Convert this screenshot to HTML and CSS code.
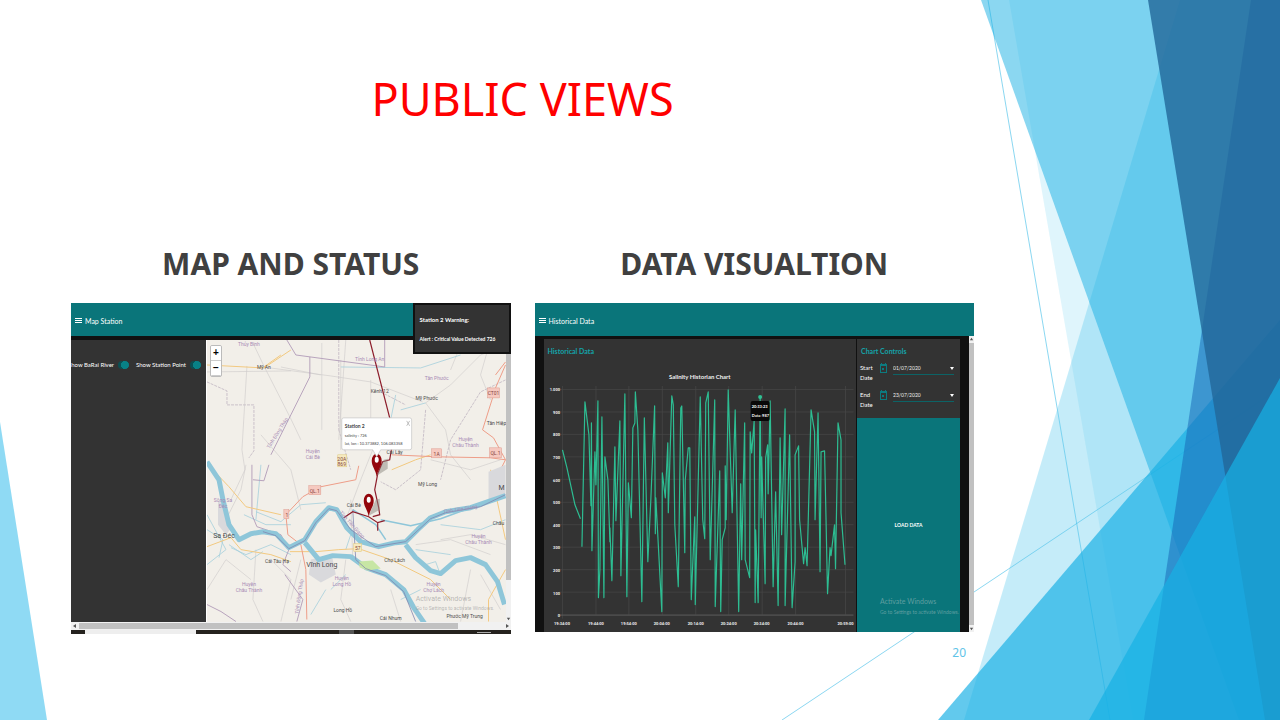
FILE: index.html
```html
<!DOCTYPE html>
<html lang="en">
<head>
<meta charset="utf-8">
<title>Public Views</title>
<link rel="stylesheet" href="styles.css">
</head>
<body>
<main class="slide">
  <svg class="facets" viewBox="0 0 1280 720" preserveAspectRatio="none" aria-hidden="true">
    <path class="facet-line" d="M988 0L1110 720M782 720L1280 388"/>
    <path fill="#5fcbef" fill-opacity=".7" d="M0 422L47 720H0z"/>
    <path fill="#5fcbef" fill-opacity=".36" d="M1180 0H1280V720H964z"/>
    <path fill="#5fcbef" fill-opacity=".2" d="M1009 0H1280V720H1133z"/>
    <path fill="#17b0e4" fill-opacity=".68" d="M1280 320V720H938z"/>
    <path fill="#17b0e4" fill-opacity=".5" d="M981 0H1280V720H1239z"/>
    <path fill="#1662b3" fill-opacity=".5" d="M1251 0H1280V720H1144z"/>
    <path fill="#226698" fill-opacity=".8" d="M1148 0H1280V720H1265z"/>
    <path fill="#17b0e4" fill-opacity=".7" d="M1280 378V720H1089z"/>
  </svg>

  <div class="content">
    <h1 class="title">PUBLIC VIEWS</h1>
    <div class="columns">
      <section class="column">
        <h2 class="heading">MAP AND STATUS</h2>
        <div class="screen">
          <header class="bar"><svg class="burger" viewBox="0 0 7 7"><path d="M0 1.500H7M0 3.500H7M0 5.500H7"/></svg>Map Station</header>
          <aside class="toast"><strong>Station 2 Warning:</strong><b>Alert : Critical Value Detected 726</b></aside>
          <div class="map-body">
            <div class="toggles">
              <label class="toggle toggle-first">Show BaRai River<input type="checkbox" checked></label>
              <label class="toggle">Show Station Point<input type="checkbox" checked></label>
            </div>
            <div class="map">
              <svg class="map-art" viewBox="206 340 299 282">
                <g class="border">
                  <path d="M206 382L226 391V405H253V451L248 458"/>
                  <path d="M338 340V430M338 430L350 470M380 392L405 405M425 410L420 470L395 490L380 482M505 380L480 392L450 440L440 480"/>
                </g>
                <g class="minor">
                  <path d="M252 343L263 366L290 419L300 440M246 366L241 450L244 470L230 500M206 372L290 371M262 367L330 376L370 382L422 402M321 343V430M340 360V450M370 380V430M425 403L450 385L480 355L505 345M280 367L320 375M425 403L445 430L450 455L470 480M345 340L338 440M460 345L450 370M260 435L290 470L300 510M245 465L240 490L225 520M206 590L225 560L250 580M300 560L290 600M350 500L352 560M380 430L360 480L345 520M430 460L470 470L500 460M440 540L470 535L505 545M415 545L450 540L490 555M345 560L340 600L350 622M270 560L290 580L280 622M470 570L460 622M480 575L500 610M390 590L400 622M255 550L252 600L262 622M490 340L480 375L490 400"/>
                </g>
                <g class="stream">
                  <path d="M206 515L225 550L206 565M230 548L245 555L270 545L290 555M243 515L265 525L290 525M395 395L390 420M340 367L420 368L460 355M400 410L425 403M255 512L280 522L300 505L325 503M260 465L255 520M350 535L345 550M440 525L480 530L505 520M415 550L450 555M325 590L310 615M345 575L330 590M420 590L400 600M206 530L222 540L218 558M228 545L250 560L262 552M425 565L435 562L439 573"/>
                </g>
                <g class="purple">
                  <path d="M286 340L295 355L384 367V340M309 357V377L290 415L270 455M251 465V515L256 527L280 535L288 550L282 565L290 572M206 605L220 612L235 622M252 480L263 481L268 465M284 575L302 600L296 622"/>
                </g>
                <g class="road">
                  <path d="M206 365L263 368L290 350M207 465L228 487L245 507L280 515M206 547L230 538L240 550L270 555L290 562M263 367L280 355M289 552L315 552L338 550L358 549L390 560L430 580L450 600M391 470L415 460L430 455M490 470L505 540M505 570L488 600V622"/>
                </g>
                <g class="highway">
                  <path d="M285 515L302 497L320 487L355 480L358 466M391 455L436 457L490 458L505 460M285 515L287 535L300 545L305 570L306 620M495 375L505 362M493 395L482 430L493 438L505 460L495 480M505 365L492 395"/>
                </g>
                <path fill="#d9d9dc" d="M217 502L223 500L229 530L225 535L217 525zM310 560L331 555L335 575L320 583L308 575zM488 472L505 465V495L488 500z"/>
                <g class="river">
                  <path d="M206 462L218 480L222 500L228 525L238 540L250 534L262 532L275 534L288 548L304 540L315 522L328 508L336 510L346 528L360 542L378 547L395 543L405 542L417 530L430 518L445 512L470 508L505 496"/>
                  <path d="M304 543L318 560L332 556L350 557L365 568L385 575L403 590L413 608L424 624"/>
                  <path d="M405 545L415 558L430 571L440 574L455 561L470 558L485 565L497 582L504 605"/>
                  <path class="thin" d="M352 510L375 525L385 540M380 520L410 526L440 519L470 508"/>
                </g>
                <path fill="#c7e6a4" d="M358 562L372 561L380 569L367 571L359 568z"/>
                <path class="ferry" d="M262 532L275 536L288 549L304 541L315 523L328 509L336 511L350 530L375 547L405 542L430 519L445 513L480 507L505 495M352 510L355 560L365 569L385 576L403 592L415 622"/>
                <g class="route">
                  <path d="M369 340L389 418L391 448L389 460L382 462L377 474L374 490L378 508L379 515L372 517M343 518L352 512L368 517L377 523L384 521M377 523V531"/>
                </g>
                <g class="shield">
                  <rect x="487" y="388" width="12" height="10"/><rect x="431" y="449" width="10" height="9"/><rect x="489" y="448" width="12" height="10"/><rect x="308" y="486" width="12" height="9"/><rect x="283" y="510" width="5" height="9"/>
                </g>
                <g fill="#f6eac0" stroke="#ddc77b" stroke-width=".5"><rect x="337" y="455" width="9" height="12"/><rect x="353" y="544" width="8" height="8"/></g>
                <g class="shield-text"><text x="493" y="395">CT01</text><text x="436" y="456">1A</text><text x="495" y="455">QL.1</text><text x="314" y="493">QL.1</text><text x="286" y="517">1</text><text x="341" y="461">20A</text><text x="341" y="466">869</text><text x="357" y="550">57</text></g>
                <g class="district">
                  <text x="248" y="346">Thủy Bình</text><text x="369" y="361">Tỉnh Long An</text><text x="436" y="380">Tân Phước</text><text x="465" y="441">Huyện</text><text x="465" y="447">Châu Thành</text><text x="312" y="453">Huyện</text><text x="312" y="459">Cái Bè</text><text x="222" y="502">Sông Sa</text><text x="222" y="508">Đéc</text><text x="248" y="586">Huyện</text><text x="248" y="592">Châu Thành</text><text x="341" y="580">Huyện</text><text x="341" y="586">Long Hồ</text><text x="433" y="586">Huyện</text><text x="433" y="592">Chợ Lách</text><text x="478" y="538">Huyện</text><text x="478" y="544">Châu Thành</text>
                  <text transform="translate(278 434) rotate(-58)">Tỉnh Đồng Tháp</text><text transform="translate(350 526) rotate(48)">Tỉnh Tiền Giang</text><text transform="translate(460 511) rotate(-9)">Tỉnh Tiền Giang</text><text transform="translate(300 597) rotate(-82)">Tỉnh Đồng Tháp</text>
                </g>
                <g class="place">
                  <text x="263" y="369">Mỹ An</text><text x="379" y="393">Kênh 12</text><text x="426" y="400">Mỹ Phước</text><text x="496" y="425">Tân Hiệp</text><text x="394" y="454">Cai Lậy</text><text x="427" y="486">Mỹ Long</text><text x="353" y="507">Cái Bè</text><text x="276" y="563">Cái Tàu Hạ</text><text x="394" y="562">Chợ Lách</text><text x="342" y="612">Long Hồ</text><text x="390" y="620">Cái Nhum</text><text x="464" y="618">Phước Mỹ Trung</text><text x="498" y="525">Châu</text>
                  <g class="city"><text x="223" y="538">Sa Đéc</text><text x="321" y="567">Vĩnh Long</text><text x="501" y="490">M</text></g>
                </g>
                <g class="ghost"><text class="ghost-big" x="415" y="601">Activate Windows</text><text x="415" y="610">Go to Settings to activate Windows.</text></g>
                <path fill="#8b8780" fill-opacity=".5" d="M376 476L383 460L387 459L387 469zM368 516L375 500L379 499L379 510z"/>
                <path class="pin" d="M376 477C375 470 371 467 371 461A5 7 0 0 1 381 461C381 467 377 470 376 477z"/>
                <path class="pin" d="M368 517C367 510 363 507 363 501A5 7 0 0 1 373 501C373 507 369 510 368 517z"/>
                <g fill="#fff"><ellipse cx="376" cy="460" rx="2" ry="3"/><ellipse cx="368" cy="500" rx="2" ry="3"/></g>
                <g class="popup">
                  <path class="bubble" d="M343 418H409Q411 418 411 420V448Q411 450 409 450H380L376 457L372 450H343Q341 450 341 448V420Q341 418 343 418z"/>
                  <text class="popup-name" x="344" y="428">Station 2</text><text x="344" y="437">salinity : 726</text><text x="344" y="445">lat, lon : 10.373882, 106.083358</text>
                  <path d="M406 421L409 426M409 421L406 426" stroke="#999" stroke-width=".6"/>
                </g>
              </svg>
              <div class="zoomer"><button type="button" aria-label="Zoom in">+</button><button type="button" aria-label="Zoom out">−</button></div>
            </div>
            <div class="vscroll"><i class="vthumb vthumb-map"></i><svg viewBox="0 0 6 6"><path d="M1 2H5L3 5z"/></svg></div>
          </div>
          <div class="hscroll"><svg viewBox="0 0 6 6"><path d="M4 1V5L1 3z"/></svg><i class="hthumb"></i><svg class="arrow-right" viewBox="0 0 6 6"><path d="M2 1V5L5 3z"/></svg></div>
          <div class="taskbar"><i class="task-search"></i><i class="task-item"></i><i class="task-clock"></i></div>
        </div>
      </section>

      <section class="column">
        <h2 class="heading">DATA VISUALTION</h2>
        <div class="screen">
          <header class="bar"><svg class="burger" viewBox="0 0 7 7"><path d="M0 1.500H7M0 3.500H7M0 5.500H7"/></svg>Historical Data</header>
          <div class="data-body">
            <div class="cards">
              <div class="chart-card">
                <h3 class="card-title">Historical Data</h3>
                <svg class="chart" viewBox="543 366 313 266">
                  <path class="grid" d="M561.500 386V619M595 386V615M628 386V615M661.500 386V615M695 386V615M728 386V615M761.500 386V615M795 386V615M845 386V615M558 389.500H853M558 412H853M558 434.500H853M558 457H853M558 479.500H853M558 502.500H853M558 525H853M558 547.500H853M558 570H853M558 592.500H853"/>
                  <path class="axis" d="M558 615.500H853"/>
                  <text class="chart-title" x="699" y="379">Salinity Historian Chart</text>
                  <g class="ytick"><text x="559" y="391">1.000</text><text x="559" y="414">900</text><text x="559" y="436">800</text><text x="559" y="459">700</text><text x="559" y="482">600</text><text x="559" y="504">500</text><text x="559" y="527">400</text><text x="559" y="549">300</text><text x="559" y="572">200</text><text x="559" y="595">100</text><text x="559" y="617">0</text></g>
                  <g class="xtick"><text x="561" y="625">19:34:00</text><text x="595" y="625">19:44:00</text><text x="628" y="625">19:54:00</text><text x="661" y="625">20:04:00</text><text x="695" y="625">20:14:00</text><text x="728" y="625">20:24:00</text><text x="761" y="625">20:34:00</text><text x="795" y="625">20:44:00</text><text x="845" y="625">20:59:00</text></g>
                  <path class="series" d="M561.500 450L566 468L574 505L579.500 519M581 547L584 402L588 435L590 506L590.500 423L591 551L594 452L595 485L597 401L597.500 598L599 570L601 417L603 598L604 457L607 480L609 542V528L611 581L614 447L615 521L619 421L620 576L624 394L626 597L627.500 483L630.500 518L632 428L634 423L634.500 392L637 430L641 602L643.500 418L647 562L650 500L653.800 406L654.500 534L655 498L661 612L661.500 473L664.500 498L667 443L667.500 513L671 396L672.500 405L674 525L677.500 587L680 408L681 406L684 553L684.500 480L687.500 448H689L690.500 600L694 517L694.500 605L699.500 397L702 520L704 539L705 403L707.500 392L709.500 560L714 400L714.500 607L719 471L720 612L721.500 540L724.500 528V466L725.500 520L727.500 390L731.500 513L734.500 410L738 612L740 484L741 560L744 423L744.500 560L749 578L749.500 432L751 453L753.500 421L754.500 603L755 530L757.500 603L759.500 397L760.500 518L761 457L764.500 584L765 458L767 445L767.500 494L769.500 401L772.500 587L775 492L777.500 606L779.500 438L781 535L784.500 409V606L789 435L791.500 608L794.500 562V455L798 446L799 520L803 564L804.500 548L806.500 566L810.500 410L814 432L814.500 520L817.500 413L819.500 572L820.500 452L824 451L825.500 520L827 594L829.500 548L830.500 556L834 525L835 569L837.500 423L840.500 440V513L844.500 565"/>
                  <circle cx="759.500" cy="397" r="2" fill="#2fc193"/>
                  <rect x="750" y="401" width="19" height="20" rx="2" fill="#080808"/>
                  <g class="tip"><text x="751" y="408">20:33:23</text><text x="751" y="417">Data: 987</text></g>
                </svg>
              </div>
              <div class="controls">
                <h3 class="card-title">Chart Controls</h3>
                <div class="field"><label for="start">Start Date</label><svg class="calendar" viewBox="0 0 7 10"><path fill-rule="evenodd" d="M0 1H1V0H2V1H5V0H6V1H7V10H0zM1 3V9H6V3zM2 5H4V7H2z"/></svg><span class="date"><input id="start" type="text" value="01/07/2020"></span></div>
                <div class="field"><label for="end">End Date</label><svg class="calendar" viewBox="0 0 7 10"><path fill-rule="evenodd" d="M0 1H1V0H2V1H5V0H6V1H7V10H0zM1 3V9H6V3zM2 5H4V7H2z"/></svg><span class="date"><input id="end" type="text" value="23/07/2020"></span></div>
                <button class="load" type="button">LOAD DATA</button>
                <p class="watermark"><span class="watermark-big">Activate Windows</span>Go to Settings to activate Windows.</p>
              </div>
            </div>
            <div class="vscroll"><svg viewBox="0 0 6 6"><path d="M1 4H5L3 1z"/></svg><i class="vthumb"></i><svg viewBox="0 0 6 6"><path d="M1 2H5L3 5z"/></svg></div>
          </div>
        </div>
      </section>
    </div>
    <p class="page-number">20</p>
  </div>
</main>
</body>
</html>
```
FILE: styles.css
```css
* { box-sizing: border-box; }
body { margin: 0; background: #fff; }
h1, h2, h3, p { margin: 0; }

.slide {
  position: relative;
  min-height: 100vh;
  overflow: hidden;
  font-family: "Noto Sans", "Open Sans", sans-serif;
}
.facets { position: absolute; inset: 0; width: 100%; height: 100%; }
.facet-line { fill: none; stroke: #17b0e4; stroke-opacity: .5; stroke-width: 1; }

.content { position: relative; padding: 67px 306px 0 71px; }
.title { color: #f00; font-size: 45px; line-height: 64px; font-weight: 400; text-align: center; }
.columns { display: grid; grid-template-columns: 1fr 1fr; gap: 24px; margin-top: 108px; }
.column { min-width: 0; }
.heading { height: 64px; color: #404040; font-size: 30px; line-height: 50px; font-weight: 700; text-align: center; white-space: nowrap; }
.page-number { margin-top: 11px; padding-right: 8px; color: #5fc4e8; font-size: 12px; line-height: 16px; text-align: right; }

.screen {
  position: relative;
  overflow: hidden;
  background: #111;
  color: #fff;
  font-family: Lato, "Noto Sans", sans-serif;
  font-size: 7px;
  line-height: 10px;
}
.bar { display: flex; align-items: center; gap: 3px; height: 33px; padding: 2px 4px 0; background: #0a757a; }
.burger { width: 7px; height: 7px; fill: none; stroke: #fff; shape-rendering: crispEdges; }

.toast {
  position: absolute; top: 0; right: 0; z-index: 1;
  display: flex; flex-direction: column; gap: 9px;
  width: 98px; height: 51px; padding: 10px 5px;
  border: 2px solid #111; background: #333;
  font-size: 6px; line-height: 10px; white-space: nowrap;
}
.toast b { font-size: 5px; }
.map-body { display: flex; padding-top: 4px; }
.toggles { display: flex; align-items: flex-start; gap: 7px; width: 135px; flex: none; padding-top: 20px; overflow: hidden; background: #333; font-size: 6px; }
.toggle { display: flex; align-items: center; gap: 4px; white-space: nowrap; }
.toggle-first { margin-left: -3px; }
.toggle input {
  appearance: none; width: 11px; height: 8px; flex: none; margin: 0; border-radius: 4px;
  background: radial-gradient(circle at 7px 4px, #088186 4px, #0b4f52 4px);
}
.map { position: relative; flex: 1; min-width: 0; border-left: 1px solid #fff; background: #f2efe9; font-family: Roboto, "Noto Sans", sans-serif; }
.map-art { display: block; width: 100%; }
.zoomer { position: absolute; top: 5px; left: 3px; display: flex; flex-direction: column; border: 1px solid #bbb; border-radius: 2px; overflow: hidden; }
.zoomer button { width: 10px; height: 15px; padding: 0; border: 0; border-bottom: 1px solid #ccc; background: #fff; color: #000; font: 700 10px/14px "Liberation Sans", sans-serif; }

.border { fill: none; stroke: #b9adbb; stroke-width: .7; stroke-dasharray: 3 1; }
.minor { fill: none; stroke: #cdc9c9; stroke-width: .6; }
.stream { fill: none; stroke: #a4cfdc; stroke-width: .8; }
.purple { fill: none; stroke: #b19bb8; stroke-width: .9; }
.road { fill: none; stroke: #f3c980; stroke-width: 1; }
.highway { fill: none; stroke: #ee9d88; stroke-width: 1; }
.river { fill: none; stroke: #8ec6d9; stroke-width: 5; stroke-linejoin: round; }
.river .thin { stroke-width: 1.500; }
.ferry { fill: none; stroke: #8186b0; stroke-width: .8; }
.route { fill: none; stroke: #8d1d2b; stroke-width: 1.200; }
.shield { fill: #f6c9c0; stroke: #dd9a8d; stroke-width: .5; }
.shield-text { fill: #87463d; font-size: 5px; text-anchor: middle; }
.district { fill: #a88bb5; font-size: 5px; text-anchor: middle; }
.place { fill: #4b4b4b; font-size: 5px; text-anchor: middle; }
.city { font-size: 7px; }
.ghost { fill: #999; fill-opacity: .65; font-size: 5px; }
.ghost-big { font-size: 7px; }
.pin { fill: #93050b; }
.popup { fill: #444; font-family: Lato, sans-serif; font-size: 4px; }
.popup-name { font-size: 5px; font-weight: 700; }
.bubble { fill: #fff; stroke: #bbb; stroke-width: .6; }

.vscroll { display: flex; flex-direction: column; width: 5px; flex: none; background: #f1f1f1; }
.vscroll svg { width: 5px; height: 7px; fill: #555; }
.vthumb { flex: 1; background: #c1c1c1; }
.vthumb-map { margin-bottom: 35px; }
.hscroll { display: flex; align-items: center; height: 8px; padding-top: 1px; background: #f1f1f1; }
.hscroll svg { width: 8px; height: 6px; fill: #555; }
.hthumb { width: 379px; height: 6px; background: #c1c1c1; }
.hscroll .arrow-right { margin-left: auto; }
.taskbar { display: flex; height: 4px; padding-left: 14px; background: #25221e; }
.task-search { width: 111px; background: #eee; }
.task-item { width: 15px; margin-left: 143px; background: #555; }
.task-clock { width: 14px; height: 1px; margin: 2px 20px 0 auto; background: #aaa; }

.data-body { display: flex; }
.cards { display: flex; flex: 1; min-width: 0; gap: 1px; padding: 3px 9px 0; }
.chart-card { flex: 1; min-width: 0; background: #333; }
.card-title { padding: 7px 4px 0; color: #14a3a9; font-size: 7px; line-height: 10px; font-weight: 700; }
.chart { display: block; width: 100%; margin-top: 10px; }
.grid { fill: none; stroke: #484848; stroke-width: .7; }
.axis { fill: none; stroke: #666; stroke-width: .8; }
.chart-title { fill: #eee; font-size: 6px; font-weight: 700; text-anchor: middle; }
.ytick, .xtick { fill: #eee; font-family: Roboto, sans-serif; font-size: 4px; font-weight: 700; }
.ytick { text-anchor: end; }
.xtick { text-anchor: middle; }
.series { fill: none; stroke: #2dbd92; stroke-width: 1.200; stroke-linejoin: round; }
.tip { fill: #fff; font-size: 4px; font-weight: 700; }

.controls { position: relative; display: flex; flex-direction: column; width: 103px; flex: none; background: #333; }
.field { display: grid; grid-template-columns: 14px 7px 1fr; column-gap: 6px; height: 27px; padding: 7px 6px 0 3px; font-size: 6px; line-height: 10px; }
.calendar { width: 7px; height: 10px; fill: #0c7b80; }
.date { position: relative; height: 12px; border-bottom: 1px solid #0c6366; }
.date::after { content: ""; position: absolute; right: 0; top: 4px; border: 2px solid transparent; border-top: 3px solid #fff; border-bottom: 0; }
.date input { display: block; width: 100%; height: 10px; padding: 0; border: 0; background: none; color: #eee; font: inherit; font-size: 5px; }
.load { flex: 1; margin-top: 8px; padding: 0; border: 0; background: #0a757a; color: #fff; font: 700 5px/8px Lato, sans-serif; }
.watermark { position: absolute; left: 23px; bottom: 15px; color: #5f9ea0; font-size: 5px; line-height: 10px; white-space: nowrap; }
.watermark-big { display: block; font-size: 7px; line-height: 12px; }
```
